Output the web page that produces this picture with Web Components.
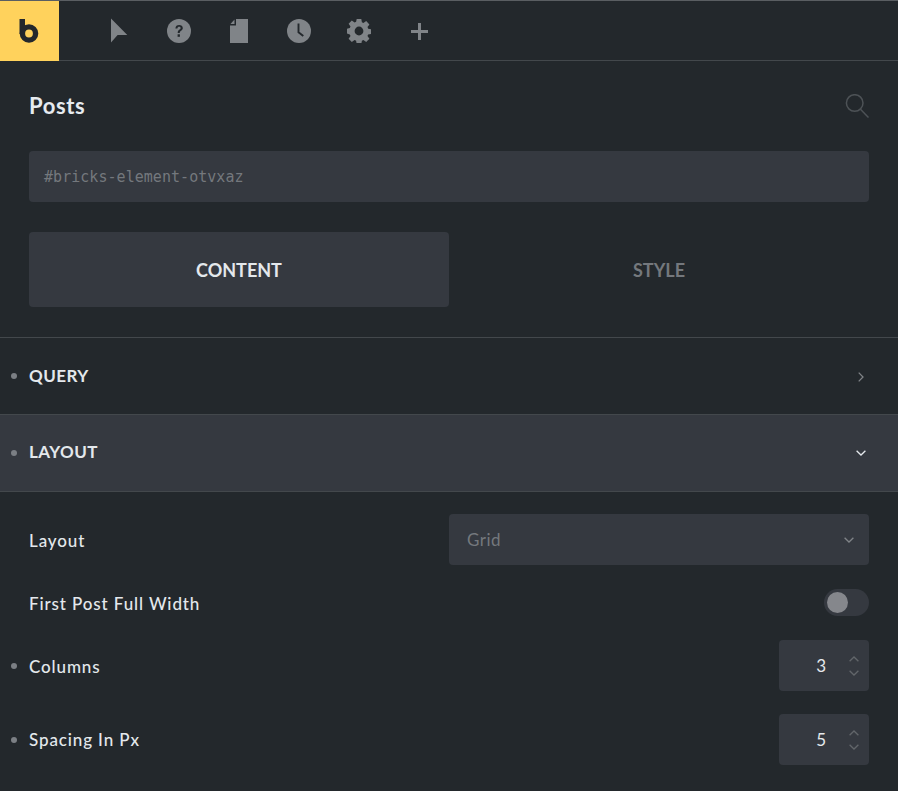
<!DOCTYPE html>
<html lang="en"><head><meta charset="utf-8"><title>Posts</title>
<style>
html,body{margin:0;padding:0;background:#23282c;height:100%}
body{font-family:Lato,"Noto Sans",sans-serif;color:#e4e8ec;overflow:hidden}
</style></head><body>
<bricks-panel>
  <bricks-toolbar></bricks-toolbar>
  <bricks-head title-text="Posts" element-id="#bricks-element-otvxaz"></bricks-head>
  <bricks-tabs></bricks-tabs>
  <bricks-accordion label="QUERY"></bricks-accordion>
  <bricks-accordion label="LAYOUT" open></bricks-accordion>
  <bricks-controls>
    <bricks-row label="Layout"><bricks-select value="Grid"></bricks-select></bricks-row>
    <bricks-row class="t" label="First Post Full Width"><bricks-toggle></bricks-toggle></bricks-row>
    <bricks-row label="Columns" dot><bricks-number value="3"></bricks-number></bricks-row>
    <bricks-row label="Spacing In Px" dot up><bricks-number value="5"></bricks-number></bricks-row>
  </bricks-controls>
</bricks-panel>
<script>
function def(name,html){
  customElements.define(name,class extends HTMLElement{
    constructor(){super();this.attachShadow({mode:'open'});}
    connectedCallback(){
      const get=(a,d='')=>this.getAttribute(a)??d;
      this.shadowRoot.innerHTML=typeof html==='function'?html(get,this):html;
    }
  });
}
const G='#808488';
const chevDown=(c,w=10,h=6,s=1.3)=>`<svg width="${w}" height="${h}" viewBox="0 0 10 6" fill="none" stroke="${c}" stroke-width="${s}"><path d="M.6.7 5 5 9.4.7"/></svg>`;
const chevUp=(c,w=10,h=6,s=1.3)=>`<svg width="${w}" height="${h}" viewBox="0 0 10 6" fill="none" stroke="${c}" stroke-width="${s}"><path d="M.6 5.300 5 1 9.4 5.300"/></svg>`;

def('bricks-panel',`<style>:host{display:block;width:898px;height:791px;background:#23282c;box-sizing:border-box;border-top:1px solid #5a5e62}</style><slot></slot>`);

def('bricks-toolbar',`<style>
:host{display:flex;height:59px;border-bottom:1px solid #43484c}
.logo{width:59px;height:60px;background:#ffd25c;display:flex;align-items:center;justify-content:center;flex:none}
.logo svg{margin-left:-1px}
nav{display:flex;padding-left:30px;height:60px}
.i{width:60px;display:flex;align-items:center;justify-content:center}
svg{display:block}
</style>
<div class="logo"><svg width="20" height="24" viewBox="0 0 20 24" role="img" aria-label="Bricks logo"><rect x=".5" width="5.500" height="15" fill="#23282c"/><circle cx="10" cy="14.500" r="6.600" fill="none" stroke="#23282c" stroke-width="5.400"/></svg></div>
<nav>
<div class="i"><svg width="20" height="26" viewBox="0 0 20 26"><path fill="${G}" d="M2 .5 18.300 17H8.600L2 24.600z"/></svg></div>
<div class="i"><svg width="24" height="24" viewBox="0 0 24 24"><circle cx="12" cy="12" r="12" fill="${G}"/><path d="M8.400 9.400c.1-2.200 1.600-3.400 3.700-3.400 2.200 0 3.700 1.200 3.700 3 0 1.300-.7 2.100-1.700 2.800-1 .7-1.300 1.100-1.300 2.200h-2.100c0-1.700.5-2.400 1.600-3.200.9-.6 1.300-1 1.300-1.700 0-.8-.6-1.300-1.500-1.300-1 0-1.600.6-1.700 1.600z" fill="#23282c"/><rect x="10.600" y="15.300" width="2.300" height="2.500" fill="#23282c"/></svg></div>
<div class="i"><svg width="18" height="24" viewBox="0 0 18 24"><path fill="${G}" d="M6 0H18V24H0V6.500H5.500a.5.500 0 0 0 .5-.5z"/><path fill="${G}" d="M4.500 .6V5H.5z"/></svg></div>
<div class="i"><svg width="24" height="24" viewBox="0 0 24 24"><circle cx="12" cy="12" r="12" fill="${G}"/><path d="M11.500 4.500V13.200L16.300 17" fill="none" stroke="#23282c" stroke-width="1.900"/></svg></div>
<div class="i"><svg width="24" height="24" viewBox="0 0 24 24"><path fill="${G}" fill-rule="evenodd" d="M9.700 0h4.600l.6 3.300 1.500.7 2.800-1.900 3.200 3.300-1.900 2.700.7 1.600 3.100.6v4.600l-3.200.6-.6 1.500 1.900 2.800-3.200 3.200-2.800-1.900-1.500.6-.6 3.300H9.700l-.6-3.300-1.500-.6-2.800 1.900-3.200-3.200 1.900-2.800-.7-1.500L-.3 14.300V9.700l3.100-.6.7-1.600L1.600 4.800l3.200-3.300L7.600 3.400l1.500-.7zM12 7.600a4.400 4.400 0 1 0 0 8.800 4.400 4.400 0 0 0 0-8.800z"/></svg></div>
<div class="i"><svg width="17" height="17" viewBox="0 0 17 17"><path fill="none" stroke="${G}" stroke-width="3" d="M8.500 0V17M0 8.500H17"/></svg></div>
</nav>`);

def('bricks-head',(g)=>`<style>
:host{display:block;padding:30px 29px 30px}
.top{display:flex;justify-content:space-between;align-items:center;height:30px}
h1{margin:0;font:700 22px/30px Lato,sans-serif;letter-spacing:.6px;color:#e6ebf0}
.id{margin-top:30px;height:51px;background:#353940;border-radius:4px;display:flex;align-items:center;padding-left:15px;
 font:15px "DejaVu Sans Mono",monospace;letter-spacing:.04px;color:#74787d}
svg{display:block}
</style>
<div class="top"><h1>${g('title-text')}</h1>
<svg width="24" height="24" viewBox="0 0 24 24" fill="none" stroke="#4d5256" stroke-width="1.500"><circle cx="9.700" cy="9" r="8.300"/><path d="M15.500 15.200 23.500 23.500"/></svg></div>
<div class="id">${g('element-id')}</div>`);

def('bricks-tabs',`<style>
:host{display:flex;padding:0 29px 30px;border-bottom:1px solid #43484c}
div{flex:1;height:75px;display:flex;align-items:center;justify-content:center;font:700 18px Lato,sans-serif;border-radius:4px}
.a{background:#353940;color:#e4e8ec}.b{color:#74787d}
</style><div class="a">CONTENT</div><div class="b">STYLE</div>`);

def('bricks-accordion',(g,el)=>{const o=el.hasAttribute('open');return `<style>
:host{display:flex;align-items:center;height:76px;border-bottom:1px solid #43484c;padding:0 29px;position:relative;background:${o?'#353940':'transparent'}}
i{position:absolute;left:11px;top:35px;width:6px;height:6px;border-radius:50%;background:#7b7f84}
b{font:700 17px/20px Lato,sans-serif;letter-spacing:.45px;color:#e4e8ec;flex:1;margin-top:${o?-2:0}px}
svg{display:block;margin-right:3px}
</style><i></i><b>${g('label')}</b>
${o?chevDown('#e4e8ec',10,6):`<svg width="6" height="10" viewBox="0 0 6 10" fill="none" stroke="#808488" stroke-width="1.300" style="margin-right:5px;margin-top:1px"><path d="M.7.6 5 5 .7 9.400"/></svg>`}`});

def('bricks-controls',`<style>:host{display:flex;flex-direction:column;gap:23px;padding:22px 29px 0}
::slotted(.t){margin:1px 0}</style><slot></slot>`);

def('bricks-row',(g,el)=>`<style>
:host{display:flex;align-items:center;justify-content:space-between;position:relative;font:500 17px Lato,sans-serif;color:#e4e8ec}
span.l{letter-spacing:.88px;position:relative;top:${el.hasAttribute('up')?0:1}px}
i{position:absolute;left:-18px;top:50%;margin-top:-3px;width:6px;height:6px;border-radius:50%;background:#7b7f84}
</style>${el.hasAttribute('dot')?'<i></i>':''}<span class="l">${g('label')}</span><slot></slot>`);

def('bricks-select',(g)=>`<style>
:host{display:flex;align-items:center;justify-content:space-between;width:420px;height:51px;box-sizing:border-box;padding:0 15px 0 18px;background:#353940;border-radius:4px;font:400 17px Lato,sans-serif;letter-spacing:.5px;color:#74787d}
svg{display:block}
</style><span>${g('value')}</span>${chevDown('#808488',10,6)}`);

def('bricks-toggle',`<style>
:host{display:block;width:45px;height:27px;box-sizing:border-box;padding:3px;background:#353940;border-radius:14px}
div{width:21px;height:21px;border-radius:50%;background:#85878c}
</style><div></div>`);

def('bricks-number',(g)=>`<style>
:host{display:flex;align-items:center;justify-content:flex-end;width:90px;height:51px;background:#353940;border-radius:4px;box-sizing:border-box;padding-right:10px}
span{font:400 17px Lato,sans-serif;color:#e4e8ec;margin-right:23px}
div{display:flex;flex-direction:column;gap:8px}
svg{display:block}
</style><span>${g('value')}</span><div>${chevUp('#62666a')}${chevDown('#62666a')}</div>`);
</script>
</body></html>
